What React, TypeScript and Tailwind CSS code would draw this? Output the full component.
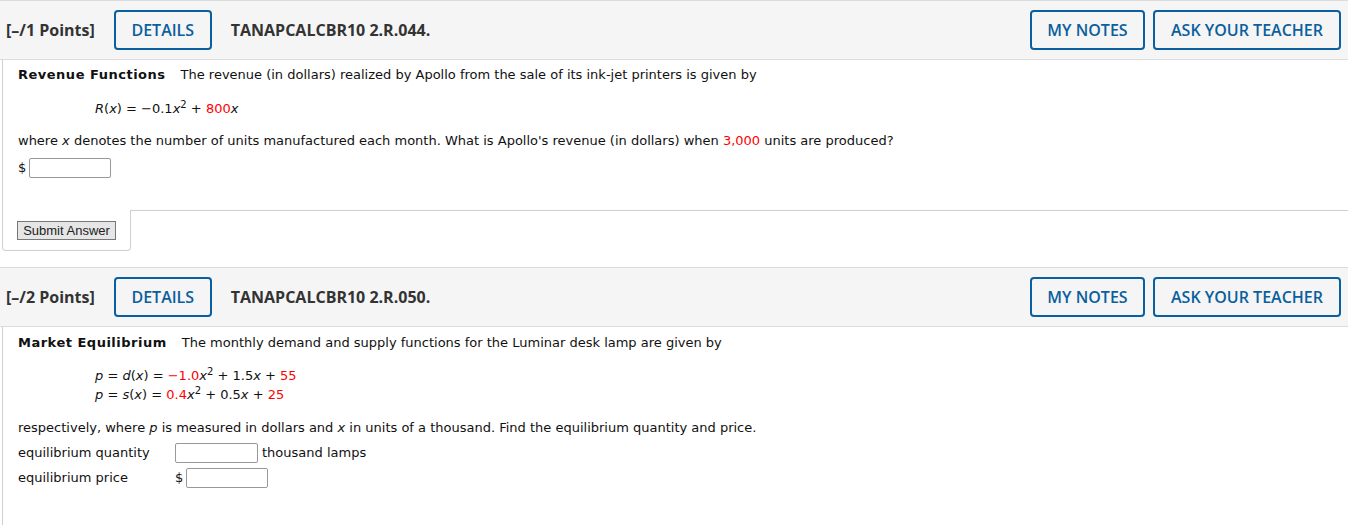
import React from "react";

const body = { fontFamily: '"DejaVu Sans", Verdana, sans-serif' };
const head = { fontFamily: '"Open Sans", Arial, sans-serif' };

function Header({ pts, id }: { pts: string; id: string }) {
  return (
    <div
      className="flex h-[60px] items-center border-y border-[#dcdcdc] bg-[#f5f5f5] pl-[6px] pr-[7px] text-[16px] font-bold text-[#333]"
      style={head}
    >
      <span>{pts}</span>
      <button className="ml-[19px] h-[40px] w-[98px] rounded-[4px] border-2 border-[#0a5f9e] text-[16px] font-semibold text-[#0a5f9e]">
        DETAILS
      </button>
      <span className="ml-[19px]">{id}</span>
      <div className="ml-auto flex gap-[8px]">
        <button className="h-[40px] w-[115px] rounded-[4px] border-2 border-[#0a5f9e] text-[16px] font-semibold text-[#0a5f9e]">
          MY NOTES
        </button>
        <button className="h-[40px] w-[188px] rounded-[4px] border-2 border-[#0a5f9e] text-[16px] font-semibold text-[#0a5f9e]">
          ASK YOUR TEACHER
        </button>
      </div>
    </div>
  );
}

const R = ({ children }: { children: React.ReactNode }) => (
  <span className="text-[#ff0000]">{children}</span>
);
const I = ({ children }: { children: React.ReactNode }) => <i>{children}</i>;
const Sq = () => <sup className="text-[10px]">2</sup>;

function Input({ w = 82 }: { w?: number }) {
  return (
    <input
      className="h-[20px] rounded-[2px] border border-[#999] bg-white"
      style={{ width: w }}
    />
  );
}

export default function App() {
  return (
    <div className="w-[1348px] bg-white text-[13px] text-[#111]" style={body}>
      <Header pts="[–/1 Points]" id="TANAPCALCBR10 2.R.044." />
      <div className="ml-[2px] border-l border-[#cfcfcf] pl-[15px]">
        <div className="h-[150px] pt-[6px]">
          <div className="leading-[18px]">
            <b className="font-bold tracking-[0.5px]">Revenue Functions</b>
            <span className="ml-[15px]">
              The revenue (in dollars) realized by Apollo from the sale of its ink-jet printers is given by
            </span>
          </div>
          <div className="mt-[16px] pl-[77px] leading-[18px]">
            <I>R</I>(<I>x</I>) = −0.1<I>x</I>
            <Sq /> + <R>800</R>
            <I>x</I>
          </div>
          <div className="mt-[14px] leading-[18px]">
            where <I>x</I> denotes the number of units manufactured each month. What is Apollo's revenue (in dollars) when{" "}
            <R>3,000</R> units are produced?
          </div>
          <div className="mt-[8px] flex items-center gap-[3px]">
            <span>$</span>
            <Input />
          </div>
        </div>
      </div>
      <div className="flex">
        <div className="ml-[2px] h-[41px] w-[129px] rounded-b-[4px] border-x border-b border-[#cfcfcf] pl-[14px] pt-[11px]">
          <button
            className="h-[19px] w-[99px] border border-[#777] bg-[#e6e6e6] text-[13px] leading-[17px] text-[#222]"
            style={{ fontFamily: '"Liberation Sans", Arial, sans-serif' }}
          >
            Submit Answer
          </button>
        </div>
        <div className="flex-1 border-t border-[#cfcfcf]" />
      </div>
      <div className="h-[16px]" />
      <Header pts="[–/2 Points]" id="TANAPCALCBR10 2.R.050." />
      <div className="ml-[2px] h-[200px] border-l border-[#cfcfcf] pl-[15px] pt-[7px]">
        <div className="leading-[18px]">
          <b className="font-bold tracking-[0.5px]">Market Equilibrium</b>
          <span className="ml-[15px]">
            The monthly demand and supply functions for the Luminar desk lamp are given by
          </span>
        </div>
        <div className="mt-[14px] pl-[77px] leading-[19px]">
          <div>
            <I>p</I> = <I>d</I>(<I>x</I>) = <R>−1.0</R>
            <I>x</I>
            <Sq /> + 1.5<I>x</I> + <R>55</R>
          </div>
          <div>
            <I>p</I> = <I>s</I>(<I>x</I>) = <R>0.4</R>
            <I>x</I>
            <Sq /> + 0.5<I>x</I> + <R>25</R>
          </div>
        </div>
        <div className="mt-[15px] leading-[18px]">
          respectively, where <I>p</I> is measured in dollars and <I>x</I> in units of a thousand. Find the equilibrium quantity and price.
        </div>
        <div className="mt-[3px] flex h-[25px] items-center">
          <span className="w-[157px]">equilibrium quantity</span>
          <Input w={83} />
          <span className="ml-[4px]">thousand lamps</span>
        </div>
        <div className="flex h-[25px] items-center">
          <span className="w-[157px]">equilibrium price</span>
          <span className="mr-[3px]">$</span>
          <Input />
        </div>
      </div>
    </div>
  );
}
